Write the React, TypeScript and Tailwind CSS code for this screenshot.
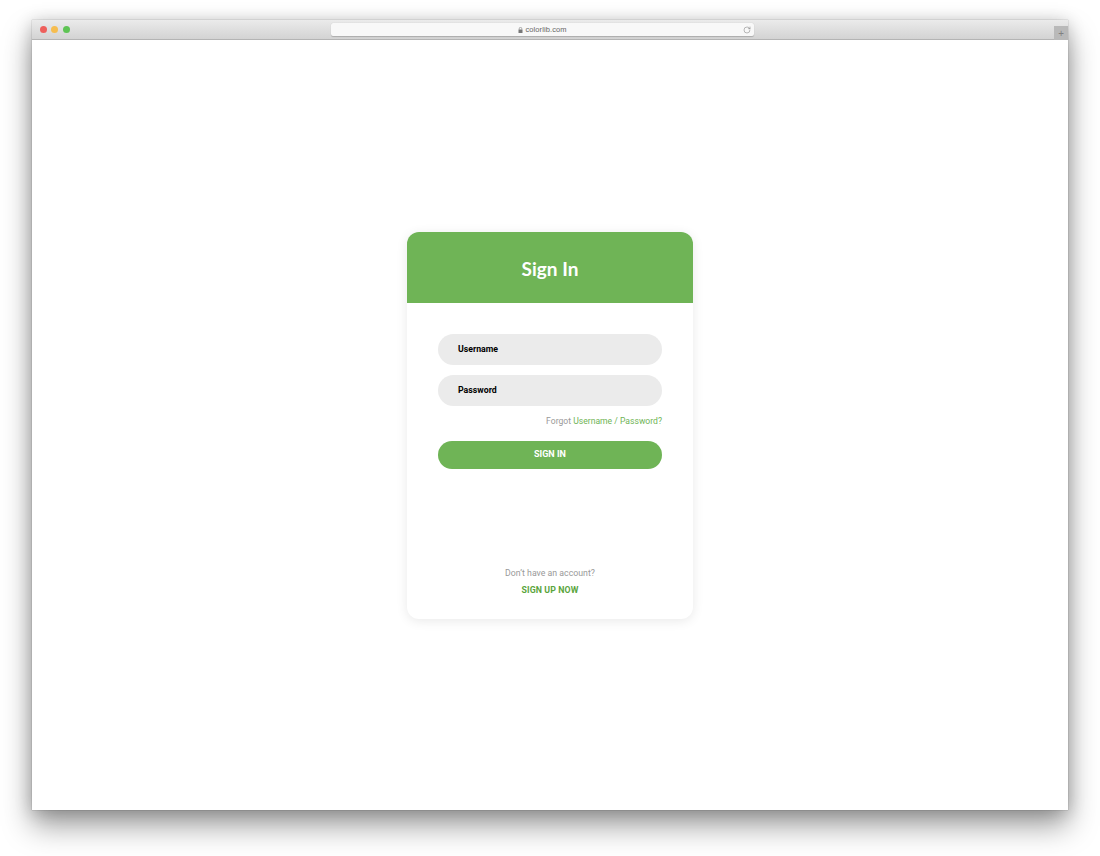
import { RotateCw } from "lucide-react";

const uiFont = "font-['Roboto','Open_Sans',sans-serif]";

function BrowserBar() {
  return (
    <div className="relative flex h-5 shrink-0 items-center border-b border-[#b4b4b4] bg-gradient-to-b from-[#ebebeb] to-[#d3d3d3] pl-[7.5px]">
      <div className="flex gap-[4.5px]">
        <span className="h-[7px] w-[7px] rounded-full bg-[#ee5f5b]" />
        <span className="h-[7px] w-[7px] rounded-full bg-[#f6bd4f]" />
        <span className="h-[7px] w-[7px] rounded-full bg-[#5ec454]" />
      </div>
      <div className="ml-[261.5px] flex h-[13px] w-[423px] items-center justify-center rounded-[2px] bg-[#f8f8f8] shadow-[0_0.5px_1px_rgba(0,0,0,0.2)]">
        <svg viewBox="0 0 10 12" className="mr-[2px] h-[6px] w-[5px] fill-[#777]">
          <path d="M1 5h8v7H1z" />
          <path d="M2.5 5V3.2a2.5 2.5 0 0 1 5 0V5" fill="none" stroke="#777" strokeWidth="1.2" />
        </svg>
        <span className="font-['Liberation_Sans',sans-serif] text-[7.5px] leading-none tracking-[0.1px] text-[#666]">colorlib.com</span>
        <RotateCw className="absolute left-[711px] h-[8px] w-[8px] text-[#777]" strokeWidth={1.5} />
      </div>
      <div className="absolute right-0 top-[6px] flex h-[14px] w-[14px] items-center justify-center bg-[#b9b9b9] text-[10px] leading-none text-[#808080]">
        +
      </div>
    </div>
  );
}

function Field({ label }: { label: string }) {
  return (
    <div className="flex h-[31px] items-center rounded-full bg-[#ebebeb] pl-[20px] text-[8.75px] font-bold text-black">
      {label}
    </div>
  );
}

function LoginCard() {
  return (
    <div className={`flex h-[387px] w-[286px] flex-col overflow-hidden rounded-[12px] bg-white shadow-[0_2px_12px_rgba(0,0,0,0.09)] ${uiFont}`}>
      <div className="flex h-[71px] shrink-0 items-center justify-center bg-[#6fb456] pt-[3px]">
        <h1 className="font-['Lato',sans-serif] text-[19px] font-bold text-white">Sign In</h1>
      </div>
      <div className="flex flex-1 flex-col px-[31px] pt-[31px]">
        <div className="flex flex-col gap-[10px]">
          <Field label="Username" />
          <Field label="Password" />
        </div>
        <p className="mt-[8px] text-right text-[8.6px] leading-[14px] text-[#999]">
          Forgot <span className="text-[#6fb456]">Username / Password?</span>
        </p>
        <button
          type="button"
          className="mt-[13px] h-[28px] rounded-full bg-[#6fb456] text-[9px] font-bold text-white"
        >
          SIGN IN
        </button>
        <p className="mt-[97px] text-center text-[8.75px] leading-[14px] text-[#999]">Don’t have an account?</p>
        <p className="mt-[3px] text-center text-[8.75px] font-bold leading-[14px] tracking-[0.1px] text-[#5aa53c]">
          SIGN UP NOW
        </p>
      </div>
    </div>
  );
}

export default function App() {
  return (
    <div className="h-[856px] w-[1100px] overflow-hidden bg-white px-8 pt-5">
      <div className="flex h-[790px] flex-col bg-white shadow-[0_0_1px_rgba(0,0,0,0.4),0_16px_28px_rgba(0,0,0,0.38),0_2px_16px_rgba(0,0,0,0.2)]">
        <BrowserBar />
        <div className="flex flex-1 justify-center pt-[192px]">
          <LoginCard />
        </div>
      </div>
    </div>
  );
}
